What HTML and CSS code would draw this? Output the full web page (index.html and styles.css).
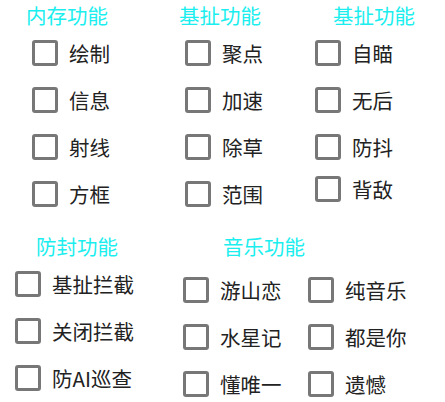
FILE: index.html
```html
<!DOCTYPE html>
<html>
<head>
<meta charset="utf-8">
<link rel="stylesheet" href="styles.css">
</head>
<body>
<div class="top">
  <div class="col col1">
    <div class="title">内存功能</div>
    <div class="row"><span class="box"></span><span class="label">绘制</span></div>
    <div class="row"><span class="box"></span><span class="label">信息</span></div>
    <div class="row"><span class="box"></span><span class="label">射线</span></div>
    <div class="row"><span class="box"></span><span class="label">方框</span></div>
  </div>
  <div class="col col2">
    <div class="title">基扯功能</div>
    <div class="row"><span class="box"></span><span class="label">聚点</span></div>
    <div class="row"><span class="box"></span><span class="label">加速</span></div>
    <div class="row"><span class="box"></span><span class="label">除草</span></div>
    <div class="row"><span class="box"></span><span class="label">范围</span></div>
  </div>
  <div class="col col3">
    <div class="title">基扯功能</div>
    <div class="row"><span class="box"></span><span class="label">自瞄</span></div>
    <div class="row"><span class="box"></span><span class="label">无后</span></div>
    <div class="row"><span class="box"></span><span class="label">防抖</span></div>
    <div class="row row-up"><span class="box"></span><span class="label">背敌</span></div>
  </div>
</div>
<div class="bottom">
  <div class="col guard">
    <div class="title">防封功能</div>
    <div class="row"><span class="box"></span><span class="label">基扯拦截</span></div>
    <div class="row"><span class="box"></span><span class="label">关闭拦截</span></div>
    <div class="row"><span class="box"></span><span class="label">防AI巡查</span></div>
  </div>
  <div class="col music">
    <div class="title">音乐功能</div>
    <div class="music-grid">
      <div class="row"><span class="box"></span><span class="label">游山恋</span></div>
      <div class="row"><span class="box"></span><span class="label">纯音乐</span></div>
      <div class="row"><span class="box"></span><span class="label">水星记</span></div>
      <div class="row"><span class="box"></span><span class="label">都是你</span></div>
      <div class="row"><span class="box"></span><span class="label">懂唯一</span></div>
      <div class="row"><span class="box"></span><span class="label">遗憾</span></div>
    </div>
  </div>
</div>
</body>
</html>
```

FILE: styles.css
```css
html, body {
  margin: 0;
  padding: 0;
  background: #ffffff;
}
body {
  width: 445px;
  height: 402px;
  overflow: hidden;
  font-family: "Noto Sans CJK SC", "Noto Sans", sans-serif;
  color: #222222;
  font-size: 20.5px;
}
.top {
  display: grid;
  grid-template-columns: 153px 136px 130px;
  margin-left: 26px;
  padding-top: 2px;
}
.col {
  display: flex;
  flex-direction: column;
}
.title {
  color: #1aeeee;
  font-size: 20.5px;
  line-height: 27px;
  height: 27px;
  white-space: nowrap;
}
.row {
  display: flex;
  align-items: center;
  height: 47px;
  white-space: nowrap;
}
.box {
  box-sizing: border-box;
  width: 26px;
  height: 26px;
  border: 3px solid #777777;
  border-radius: 3px;
  flex: none;
}
.label {
  margin-left: 11px;
  line-height: 24px;
}
.col1 .row, .col2 .row {
  padding-left: 6px;
}
.col3 .title {
  padding-left: 18px;
}
.row-up {
  margin-top: -5px;
}
.bottom {
  display: grid;
  grid-template-columns: 183px 1fr;
  margin-top: 16px;
}
.guard {
  padding-left: 15px;
}
.guard .title {
  padding-left: 21px;
}
.music .title {
  padding-left: 40px;
  margin-bottom: 6px;
}
.music-grid {
  display: grid;
  grid-template-columns: 125px 1fr;
}
```
